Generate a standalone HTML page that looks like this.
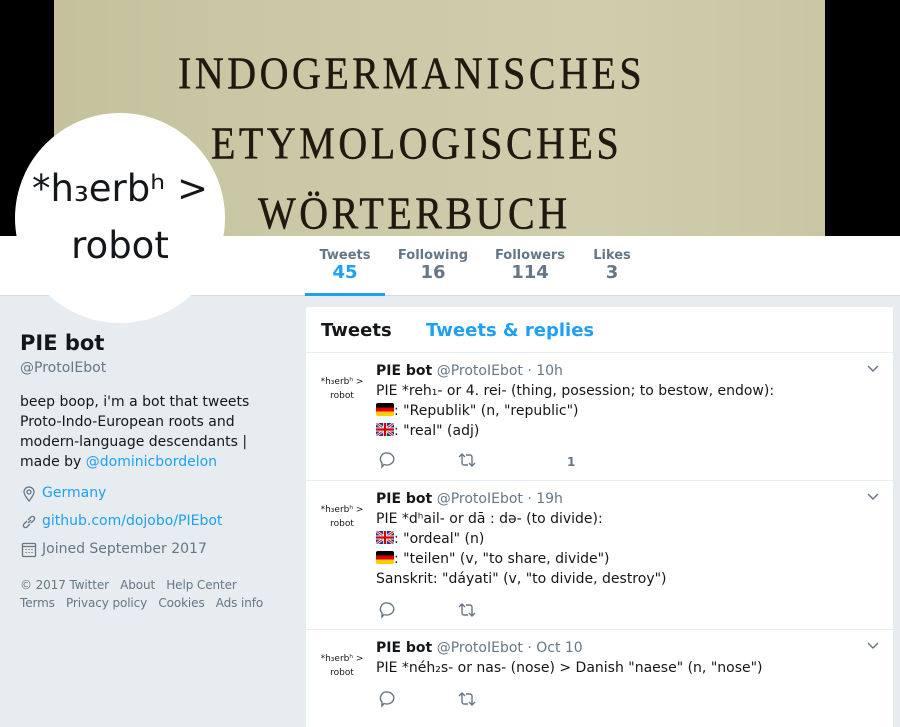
<!DOCTYPE html>
<html><head><meta charset="utf-8"><style>
*{margin:0;padding:0;box-sizing:border-box}
body{width:900px;height:714px;overflow:hidden;background:#e6ecf0;font-family:"DejaVu Sans","Liberation Sans",sans-serif;color:#14171a;position:relative}
.a{position:absolute}
.banner{left:0;top:0;width:900px;height:236px;background:#000}
.img{left:54px;top:0;width:771px;height:236px;background:linear-gradient(90deg,#c4c19c,#cbc8a6 30%,#d0cdac 70%,#cac6a3)}
.bt{font-family:"Liberation Serif",serif;color:#1e1a10;white-space:nowrap;transform:scaleY(1.15);transform-origin:left top;font-size:40px;letter-spacing:3.5px;-webkit-text-stroke:0.4px #1e1a10}
.nav{left:0;top:236px;width:900px;height:60px;background:#fff;border-bottom:1px solid #d8dde0}
.st{text-align:center;font-weight:bold}
.st .l{font-size:13px;color:#657786}
.st .n{font-size:18px;color:#657786;line-height:20px}
.av{left:15px;top:113px;width:210px;height:210px;border-radius:50%;background:#fff;text-align:center;font-size:37px;line-height:57px;padding-top:47px;white-space:nowrap}
.link{color:#1da1f2}
.side{color:#657786;font-size:14px}
.main{left:306px;top:307px;width:587px;height:420px;background:#fff}
.tw{left:306px;width:587px;border-top:1px solid #e6ecf0}
.sav{position:absolute;left:10px;top:22px;width:52px;font-size:9px;line-height:14px;text-align:center;white-space:nowrap}
.body{position:absolute;left:70px;top:8px;font-size:14px;line-height:20px;width:500px}
.hd b{font-weight:bold}
.hd span{color:#657786}
.ic{position:absolute;top:98px}
.fl{display:inline-block;width:18px;height:13px;vertical-align:-1px;border-radius:2px}
.de{background:linear-gradient(#000 0 33%,#d00 33% 66%,#fc0 66%)}
.chev{position:absolute;right:14px;top:12px}
</style></head><body>
<div class="a banner"></div>
<div class="a img"></div>
<div class="a bt" style="left:178px;top:46px">INDOGERMANISCHES</div>
<div class="a bt" style="left:211px;top:116px">ETYMOLOGISCHES</div>
<div class="a bt" style="left:258px;top:186px">WÖRTERBUCH</div>
<div class="a nav"></div>
<div class="a st" style="left:305px;top:248px;width:80px"><div class="l">Tweets</div><div class="n" style="color:#1da1f2">45</div></div>
<div class="a" style="left:305px;top:293px;width:80px;height:3px;background:#1da1f2"></div>
<div class="a st" style="left:393px;top:248px;width:80px"><div class="l">Following</div><div class="n">16</div></div>
<div class="a st" style="left:490px;top:248px;width:80px"><div class="l">Followers</div><div class="n">114</div></div>
<div class="a st" style="left:572px;top:248px;width:80px"><div class="l">Likes</div><div class="n">3</div></div>
<div class="a av">*h₃erbʰ &gt;<br>robot</div>

<div class="a" style="left:20px;top:331px;font-size:21px;font-weight:bold">PIE bot</div>
<div class="a side" style="left:20px;top:360px">@ProtoIEbot</div>
<div class="a" style="left:20px;top:392px;font-size:14px;line-height:20px;width:250px">beep boop, i'm a bot that tweets Proto-Indo-European roots and modern-language descendants | made by <span class="link">@dominicbordelon</span></div>
<svg class="a" style="left:21px;top:486px" width="16" height="16" viewBox="0 0 16 16" fill="none" stroke="#657786" stroke-width="1.3"><path d="M8 15C4 10 3 8 3 6a5 5 0 0 1 10 0c0 2-1 4-5 9z"/><circle cx="8" cy="6" r="2"/></svg>
<div class="a link" style="left:42px;top:485px;font-size:14px">Germany</div>
<svg class="a" style="left:21px;top:514px" width="16" height="16" viewBox="0 0 16 16" fill="none" stroke="#657786" stroke-width="1.3"><path d="M7 9l3-3M6 7L3 10a2 2 0 0 0 3 3l3-3M10 9l3-3a2 2 0 0 0-3-3L7 6"/></svg>
<div class="a link" style="left:42px;top:513px;font-size:14px">github.com/dojobo/PIEbot</div>
<svg class="a" style="left:21px;top:542px" width="16" height="16" viewBox="0 0 16 16" fill="none" stroke="#657786" stroke-width="1.3"><rect x="1.5" y="1.5" width="13" height="13" rx="1"/><path d="M1.5 4.5h13M5 7v1M8 7v1M11 7v1M5 10v1M8 10v1M11 10v1"/></svg>
<div class="a side" style="left:42px;top:541px">Joined September 2017</div>
<div class="a side" style="left:20px;top:576px;font-size:12px;line-height:18px;width:280px;letter-spacing:-0.1px">© 2017 Twitter &nbsp; About &nbsp; Help Center<br>Terms &nbsp; Privacy policy &nbsp; Cookies &nbsp; Ads info</div>

<div class="a main"></div>
<div class="a" style="left:321px;top:320px;font-size:18px;font-weight:bold">Tweets</div>
<div class="a" style="left:426px;top:320px;font-size:18px;font-weight:bold;color:#1da1f2">Tweets &amp; replies</div>

<svg width="0" height="0" style="position:absolute"><defs><symbol id="uk" viewBox="0 0 60 40"><rect width="60" height="40" fill="#1f3a8a"/><path d="M0 0L60 40M60 0L0 40" stroke="#fff" stroke-width="8"/><path d="M0 0L60 40M60 0L0 40" stroke="#c00" stroke-width="3"/><path d="M30 0v40M0 20h60" stroke="#fff" stroke-width="12"/><path d="M30 0v40M0 20h60" stroke="#c00" stroke-width="7"/></symbol></defs></svg>

<div class="a tw" style="top:352px;height:128px">
<div class="sav">*h₃erbʰ &gt;<br>robot</div>
<div class="body"><div class="hd"><b>PIE bot</b> <span>@ProtoIEbot · 10h</span></div>
PIE *reh₁- or 4. rei- (thing, posession; to bestow, endow):<br><span class="fl de"></span>: "Republik" (n, "republic")<br><svg class="fl" viewBox="0 0 60 40" preserveAspectRatio="none"><use href="#uk"/></svg>: "real" (adj)</div>
<svg class="chev" width="12" height="8" viewBox="0 0 12 8" fill="none" stroke="#657786" stroke-width="1.4"><path d="M1 1l5 5 5-5"/></svg>
<svg class="ic" style="left:72px" width="18" height="18" viewBox="0 0 18 18" fill="none" stroke="#657786" stroke-width="1.4"><path d="M9 2a7 6 0 1 1-3 11.5L4 16v-4A6 6 0 0 1 9 2z"/></svg>
<svg class="ic" style="left:151px" width="20" height="18" viewBox="0 0 20 18" fill="none" stroke="#657786" stroke-width="1.4"><path d="M2 6l3-3 3 3M5 3v9a2 2 0 0 0 2 2h4M18 12l-3 3-3-3M15 15V6a2 2 0 0 0-2-2H9"/></svg>
<div class="a" style="left:261px;top:102px;font-size:12px;font-weight:bold;color:#657786">1</div>
</div>

<div class="a tw" style="top:480px;height:149px">
<div class="sav">*h₃erbʰ &gt;<br>robot</div>
<div class="body"><div class="hd"><b>PIE bot</b> <span>@ProtoIEbot · 19h</span></div>
PIE *dʰail- or dā : də- (to divide):<br><svg class="fl" viewBox="0 0 60 40" preserveAspectRatio="none"><use href="#uk"/></svg>: "ordeal" (n)<br><span class="fl de"></span>: "teilen" (v, "to share, divide")<br>Sanskrit: "dáyati" (v, "to divide, destroy")</div>
<svg class="chev" width="12" height="8" viewBox="0 0 12 8" fill="none" stroke="#657786" stroke-width="1.4"><path d="M1 1l5 5 5-5"/></svg>
<svg class="ic" style="left:72px;top:120px" width="18" height="18" viewBox="0 0 18 18" fill="none" stroke="#657786" stroke-width="1.4"><path d="M9 2a7 6 0 1 1-3 11.5L4 16v-4A6 6 0 0 1 9 2z"/></svg>
<svg class="ic" style="left:151px;top:120px" width="20" height="18" viewBox="0 0 20 18" fill="none" stroke="#657786" stroke-width="1.4"><path d="M2 6l3-3 3 3M5 3v9a2 2 0 0 0 2 2h4M18 12l-3 3-3-3M15 15V6a2 2 0 0 0-2-2H9"/></svg>
</div>

<div class="a tw" style="top:629px;height:90px">
<div class="sav">*h₃erbʰ &gt;<br>robot</div>
<div class="body"><div class="hd"><b>PIE bot</b> <span>@ProtoIEbot · Oct 10</span></div>
PIE *néh₂s- or nas- (nose) &gt; Danish "naese" (n, "nose")</div>
<svg class="chev" width="12" height="8" viewBox="0 0 12 8" fill="none" stroke="#657786" stroke-width="1.4"><path d="M1 1l5 5 5-5"/></svg>
<svg class="ic" style="left:72px;top:60px" width="18" height="18" viewBox="0 0 18 18" fill="none" stroke="#657786" stroke-width="1.4"><path d="M9 2a7 6 0 1 1-3 11.5L4 16v-4A6 6 0 0 1 9 2z"/></svg>
<svg class="ic" style="left:151px;top:60px" width="20" height="18" viewBox="0 0 20 18" fill="none" stroke="#657786" stroke-width="1.4"><path d="M2 6l3-3 3 3M5 3v9a2 2 0 0 0 2 2h4M18 12l-3 3-3-3M15 15V6a2 2 0 0 0-2-2H9"/></svg>
</div>
</body></html>
